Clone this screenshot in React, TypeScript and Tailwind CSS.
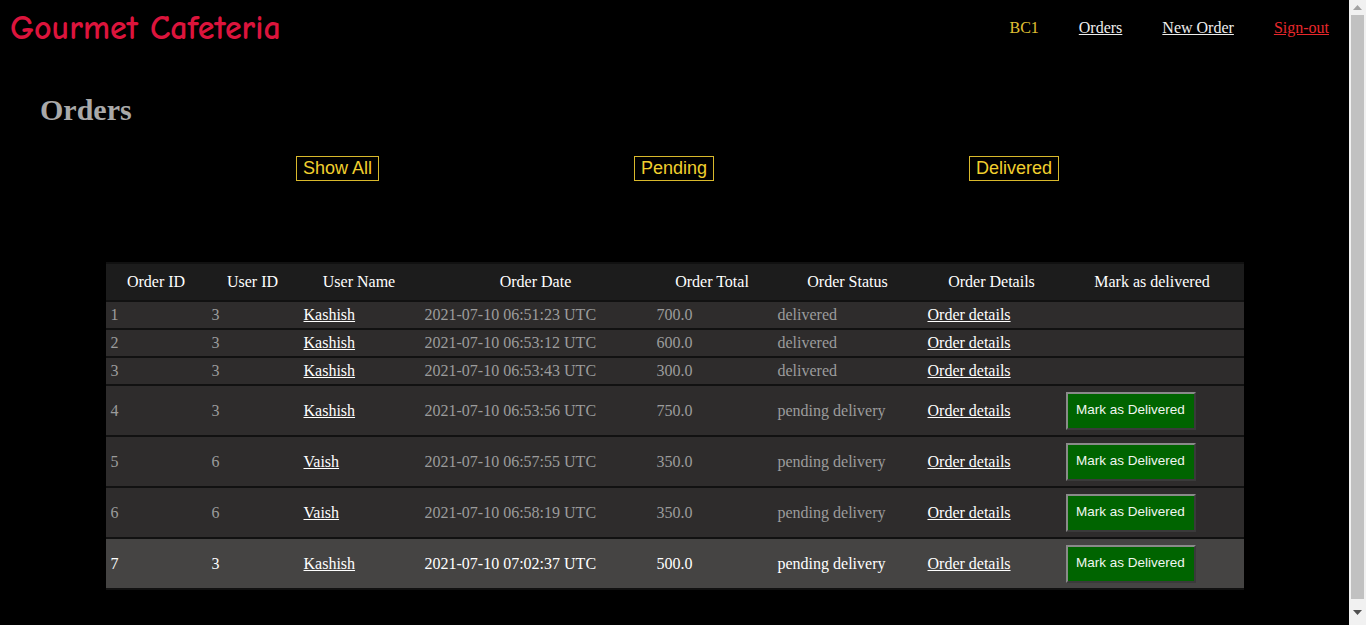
import React from 'react';

interface Order {
  id: number;
  userId: number;
  userName: string;
  date: string;
  total: string;
  status: string;
}

const orders: Order[] = [
  { id: 1, userId: 3, userName: 'Kashish', date: '2021-07-10 06:51:23 UTC', total: '700.0', status: 'delivered' },
  { id: 2, userId: 3, userName: 'Kashish', date: '2021-07-10 06:53:12 UTC', total: '600.0', status: 'delivered' },
  { id: 3, userId: 3, userName: 'Kashish', date: '2021-07-10 06:53:43 UTC', total: '300.0', status: 'delivered' },
  { id: 4, userId: 3, userName: 'Kashish', date: '2021-07-10 06:53:56 UTC', total: '750.0', status: 'pending delivery' },
  { id: 5, userId: 6, userName: 'Vaish', date: '2021-07-10 06:57:55 UTC', total: '350.0', status: 'pending delivery' },
  { id: 6, userId: 6, userName: 'Vaish', date: '2021-07-10 06:58:19 UTC', total: '350.0', status: 'pending delivery' },
  { id: 7, userId: 3, userName: 'Kashish', date: '2021-07-10 07:02:37 UTC', total: '500.0', status: 'pending delivery' },
];

const headers = [
  { label: 'Order ID', w: 'w-[101px]' },
  { label: 'User ID', w: 'w-[92px]' },
  { label: 'User Name', w: 'w-[121px]' },
  { label: 'Order Date', w: 'w-[232px]' },
  { label: 'Order Total', w: 'w-[121px]' },
  { label: 'Order Status', w: 'w-[150px]' },
  { label: 'Order Details', w: 'w-[138px]' },
  { label: 'Mark as delivered', w: 'w-[183px]' },
];

const OrderRow = ({ order, active }: { order: Order; active: boolean }) => {
  const pending = order.status !== 'delivered';
  const cell = `pl-[5px] ${pending ? 'h-[49px]' : 'h-[26px]'}`;
  return (
    <tr className={active ? 'bg-[#454443] text-white' : 'bg-[#2e2c2c] text-[#9c9c9c]'}>
      <td className={cell}>{order.id}</td>
      <td className={cell}>{order.userId}</td>
      <td className={cell}>
        <a href="#" className="text-white underline">{order.userName}</a>
      </td>
      <td className={cell}>{order.date}</td>
      <td className={cell}>{order.total}</td>
      <td className={cell}>{order.status}</td>
      <td className={cell}>
        <a href="#" className="text-white underline">Order details</a>
      </td>
      <td className={cell}>
        {pending && (
          <button className="w-[130px] h-[38px] bg-[#006400] text-[#f0f6f0] text-[13.5px] font-['Liberation_Sans',Arial,sans-serif] border-2 border-t-[#8a8a8a] border-l-[#8a8a8a] border-r-[#3a3a3a] border-b-[#3a3a3a]">
            Mark as Delivered
          </button>
        )}
      </td>
    </tr>
  );
};

// the reference shows a classic browser scrollbar on the right
const Scrollbar = () => (
  <div className="w-[17px] h-full bg-[#f1f1f1] flex flex-col items-center">
    <div className="h-[15px] flex items-center justify-center">
      <svg width="9" height="5" viewBox="0 0 9 5"><path d="M4.5 0L9 5H0z" fill="#a3a3a3" /></svg>
    </div>
    <div className="w-[13px] flex-1 bg-[#c1c1c1]" />
    <div className="h-[26px] flex items-center justify-center">
      <svg width="9" height="5" viewBox="0 0 9 5"><path d="M0 0H9L4.5 5z" fill="#505050" /></svg>
    </div>
  </div>
);

export default function App() {
  return (
    <div className="flex h-[625px] overflow-hidden bg-black font-['Liberation_Serif','Times_New_Roman',serif] text-base">
      <div className="w-[1349px] shrink-0">
        <header className="flex items-center justify-between h-[56px] pl-[10px] pr-[20px]">
          <h2 className="text-[34px] font-bold text-[#dc143c] font-['Comic_Sans_MS','Comic_Neue',cursive] leading-none">
            Gourmet Cafeteria
          </h2>
          <nav className="flex items-center gap-[40px]">
            <span className="text-[#e2c034]">BC1</span>
            <a href="#" className="text-[#eeeeee] underline">Orders</a>
            <a href="#" className="text-[#eeeeee] underline">New Order</a>
            <a href="#" className="text-[#e8282c] underline">Sign-out</a>
          </nav>
        </header>

        <h1 className="mt-[36px] ml-[40px] text-[30px] leading-[36px] font-bold text-[#a9a9a9]">Orders</h1>

        <div className="flex justify-center gap-[255px] mt-[28px] pl-[6px]">
          {['Show All', 'Pending', 'Delivered'].map(label => (
            <button
              key={label}
              className="border border-[#d9b92c] text-[#f0cf2e] text-[18px] leading-[21px] py-px px-[6px] font-['Liberation_Sans',Arial,sans-serif]"
            >
              {label}
            </button>
          ))}
        </div>

        <table className="table-fixed w-[1138px] mx-auto mt-[81px] border-separate border-spacing-x-0 border-spacing-y-[2px] bg-[#111111]">
          <thead>
            <tr className="bg-[#1c1c1c] text-white">
              {headers.map(h => (
                <th key={h.label} className={`${h.w} h-[36px] font-normal text-center`}>{h.label}</th>
              ))}
            </tr>
          </thead>
          <tbody>
            {orders.map(o => (
              <OrderRow key={o.id} order={o} active={o.id === 7} />
            ))}
          </tbody>
        </table>
      </div>
      <Scrollbar />
    </div>
  );
}
